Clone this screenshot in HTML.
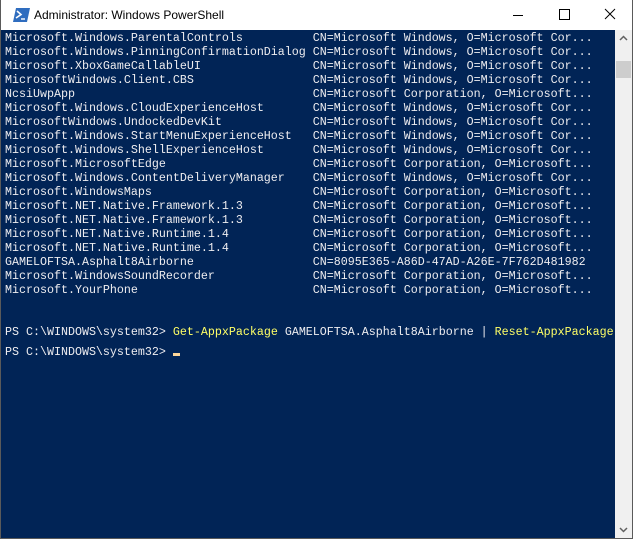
<!DOCTYPE html>
<html><head><meta charset="utf-8"><style>
html,body{margin:0;padding:0;width:633px;height:540px;overflow:hidden;background:#fff}
.win{position:absolute;left:0;top:0;width:631px;height:538px;border:1px solid #5a5a5a;border-top:none;background:#fff}
.title{position:absolute;left:0;top:0;width:631px;height:30px;background:#fff;font-family:"Liberation Sans",sans-serif;font-size:12px;color:#000}
.title .t{position:absolute;left:33px;top:8px}
.btn{position:absolute;top:0;width:46px;height:30px}
.con{position:absolute;left:0;top:30px;width:614px;height:508px;background:#012456;overflow:hidden}
pre{margin:0;padding:1px 0 0 4px;font-family:"Liberation Mono",monospace;font-size:11.67px;line-height:14px;color:#eeedf0;white-space:pre}
.y{color:#ffff66}
.cur{display:inline-block;width:7px;height:3px;background:#fed79a;vertical-align:-1px}
.last{display:block;margin-top:6px}
.sb{position:absolute;left:614px;top:30px;width:17px;height:508px;background:#f0f0f0}
.thumb{position:absolute;left:1px;top:31px;width:15px;height:17px;background:#cdcdcd}
</style></head><body>
<div class="win">
<div class="title">
<svg style="position:absolute;left:12px;top:8px" width="17" height="14" viewBox="0 0 17 14"><path d="M3 0H17L14 14H0Z" fill="#2f6dbf"/><path d="M4 3L8 6.5L3 10" stroke="#fff" stroke-width="1.6" fill="none"/><path d="M8 11H12" stroke="#fff" stroke-width="1.4"/></svg>
<span class="t">Administrator: Windows PowerShell</span>
<svg class="btn" style="left:494px" viewBox="0 0 46 30"><path d="M18 15.5H28" stroke="#000"/></svg>
<svg class="btn" style="left:540px" viewBox="0 0 46 30"><rect x="18.5" y="9.5" width="10" height="10" fill="none" stroke="#000"/></svg>
<svg class="btn" style="left:586px" viewBox="0 0 46 30"><path d="M18 9L28 19M28 9L18 19" stroke="#000"/></svg>
</div>
<div class="con"><pre>Microsoft.Windows.ParentalControls          CN=Microsoft Windows, O=Microsoft Cor...
Microsoft.Windows.PinningConfirmationDialog CN=Microsoft Windows, O=Microsoft Cor...
Microsoft.XboxGameCallableUI                CN=Microsoft Windows, O=Microsoft Cor...
MicrosoftWindows.Client.CBS                 CN=Microsoft Windows, O=Microsoft Cor...
NcsiUwpApp                                  CN=Microsoft Corporation, O=Microsoft...
Microsoft.Windows.CloudExperienceHost       CN=Microsoft Windows, O=Microsoft Cor...
MicrosoftWindows.UndockedDevKit             CN=Microsoft Windows, O=Microsoft Cor...
Microsoft.Windows.StartMenuExperienceHost   CN=Microsoft Windows, O=Microsoft Cor...
Microsoft.Windows.ShellExperienceHost       CN=Microsoft Windows, O=Microsoft Cor...
Microsoft.MicrosoftEdge                     CN=Microsoft Corporation, O=Microsoft...
Microsoft.Windows.ContentDeliveryManager    CN=Microsoft Windows, O=Microsoft Cor...
Microsoft.WindowsMaps                       CN=Microsoft Corporation, O=Microsoft...
Microsoft.NET.Native.Framework.1.3          CN=Microsoft Corporation, O=Microsoft...
Microsoft.NET.Native.Framework.1.3          CN=Microsoft Corporation, O=Microsoft...
Microsoft.NET.Native.Runtime.1.4            CN=Microsoft Corporation, O=Microsoft...
Microsoft.NET.Native.Runtime.1.4            CN=Microsoft Corporation, O=Microsoft...
GAMELOFTSA.Asphalt8Airborne                 CN=8095E365-A86D-47AD-A26E-7F762D481982
Microsoft.WindowsSoundRecorder              CN=Microsoft Corporation, O=Microsoft...
Microsoft.YourPhone                         CN=Microsoft Corporation, O=Microsoft...


PS C:\WINDOWS\system32&gt; <span class="y">Get-AppxPackage</span> GAMELOFTSA.Asphalt8Airborne | <span class="y">Reset-AppxPackage</span>
<span class="last">PS C:\WINDOWS\system32&gt; <span class="cur"></span></span></pre></div>
<div class="sb">
<svg style="position:absolute;left:0;top:0" width="17" height="17" viewBox="0 0 17 17"><path d="M5 10L8.5 6.5L12 10" stroke="#606060" stroke-width="1.5" fill="none"/></svg>
<div class="thumb"></div>
<svg style="position:absolute;left:0;top:491px" width="17" height="17" viewBox="0 0 17 17"><path d="M5 7L8.5 10.5L12 7" stroke="#606060" stroke-width="1.5" fill="none"/></svg>
</div>
</div>
</body></html>
